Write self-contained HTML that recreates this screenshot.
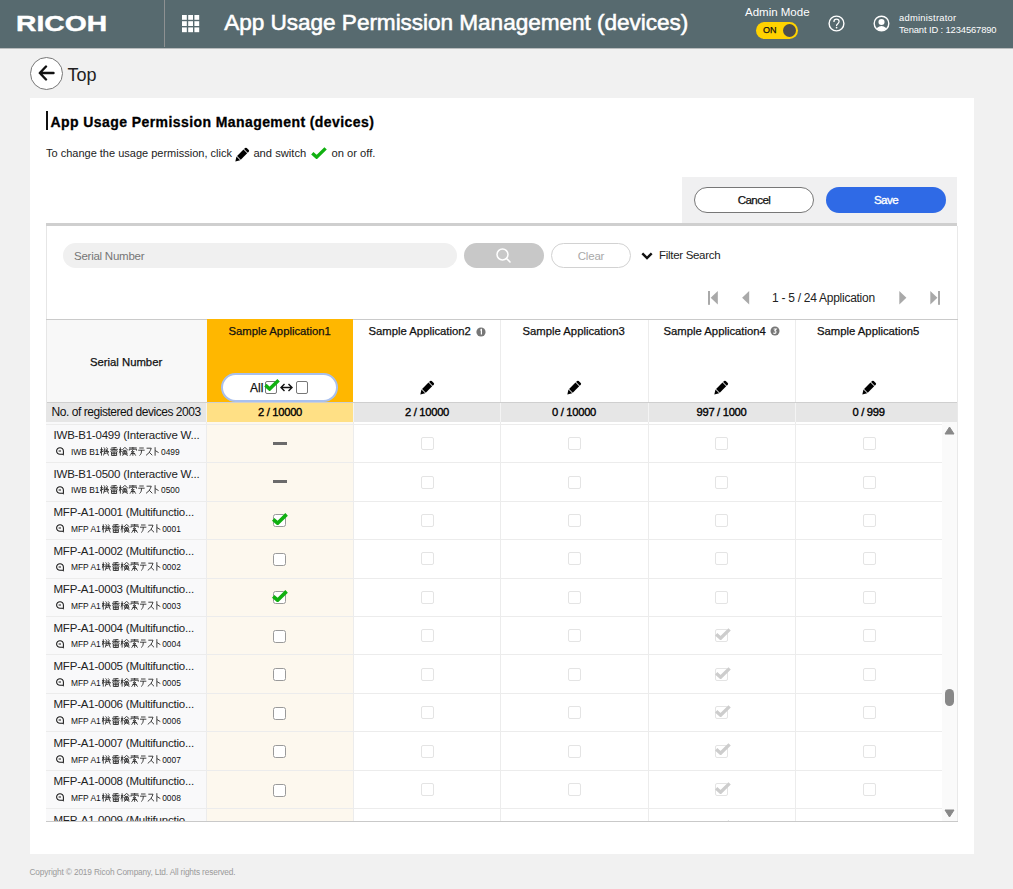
<!DOCTYPE html>
<html><head><meta charset="utf-8">
<style>
*{box-sizing:border-box;margin:0;padding:0}
html,body{width:1013px;height:889px;overflow:hidden;background:#f1f1f1;font-family:"Liberation Sans",sans-serif;color:#222}
#hdr{position:absolute;left:0;top:0;width:1013px;height:49px;background:#576a6f;border-bottom:1px solid #b9bcbd}
#panel{position:absolute;left:30px;top:98px;width:944px;height:756px;background:#fff}
.t{position:absolute;white-space:nowrap;line-height:1}
.ab{position:absolute}
.sb{-webkit-text-stroke:0.25px currentColor}
.cb{position:absolute;top:12.4px;width:13px;height:13px;border:1px solid #e4e4e4;border-radius:2px;background:#fff}
.cbd{position:absolute;top:12.8px;width:13px;height:13px;border:1.6px solid #9a9a9a;border-radius:2.5px;background:#fff}
.gchk{position:absolute;top:11.1px}
.dash{position:absolute;top:16.8px;width:14px;height:3px;background:#6b6b6b}
#rows{position:absolute;left:46px;top:422px;width:896px;height:399px;overflow:hidden}
.row{position:absolute;left:0;width:896px;height:38.45px;border-bottom:1px solid #ececec}
.s1{left:7.5px;top:5.5px;font-size:11.5px;letter-spacing:-0.21px;color:#222}
.s2{left:24.5px;top:22.3px;font-size:9.6px;color:#111;transform-origin:0 0;transform:scaleX(0.875)}
.jp{display:inline-block;vertical-align:-0.6px;margin-left:0.6px}
.mag{position:absolute;left:9.5px;top:22.6px}
.vdiv{position:absolute;width:1px;background:#ececec}
.ht{position:absolute;white-space:nowrap;line-height:1;font-size:11.3px;letter-spacing:0px;color:#111}
.pen{position:absolute;top:379.5px}
</style></head><body>
<svg width="0" height="0" style="position:absolute">
<defs>
<symbol id="g1" viewBox="0 0 10.8 9" width="10.8" height="9"><path d="M0.4 2.6 H3.4 M1.9 0.3 V8.6 M1.9 3 L0.3 6.3 M2.1 3.4 L3.4 5 M4.6 0.4 L5.8 1.8 L4.5 3.3 H6.3 M7.6 0.4 L8.8 1.8 L7.5 3.3 H9.3 M4.1 4.6 H10.4 M6.9 2.4 L10 8.6 M5.5 4.8 L4.2 8.4 M9.1 5.8 L10.3 4.8 M4.8 6.3 H7.7" fill="none" stroke="#2a2a2a" stroke-width="0.95"/></symbol>
<symbol id="g2" viewBox="0 0 10.8 9" width="10.8" height="9"><path d="M8.6 0.3 L2.2 1 M1.1 2.3 H9.9 M5.5 1 V4.4 M5.3 2.5 L1.3 4.4 M5.7 2.5 L9.7 4.4 M2.6 5 H8.4 V8.5 H2.6 Z M2.6 6.7 H8.4 M5.5 5 V8.5" fill="none" stroke="#2a2a2a" stroke-width="0.95"/></symbol>
<symbol id="g3" viewBox="0 0 10.8 9" width="10.8" height="9"><path d="M0.4 2.6 H3.4 M1.9 0.3 V8.6 M1.9 3 L0.3 6.3 M2.1 3.4 L3.4 5 M7 0.3 L4 3.1 M7 0.3 L10.5 3.1 M5.2 3.4 H8.8 M4.8 4.3 H9.2 V6.1 H4.8 Z M7 4.3 V6.1 M4 6.9 H10.4 M6.6 6.9 L4.2 8.6 M7.4 6.9 L10.4 8.6" fill="none" stroke="#2a2a2a" stroke-width="0.95"/></symbol>
<symbol id="g4" viewBox="0 0 10.8 9" width="10.8" height="9"><path d="M1 0.9 H9.9 M5.5 0 V2.1 M1.3 3.6 V2.2 H9.7 V3.6 M6 2.7 L3.8 4.7 H7 L3.2 6.5 H8 M5.5 6.5 V8.8 M3.8 7.2 L1.8 8.5 M7.2 7.2 L9.2 8.5" fill="none" stroke="#2a2a2a" stroke-width="0.95"/></symbol>
<symbol id="g5" viewBox="0 0 8.8 9" width="8.8" height="9"><path d="M2 1 H7.2 M0.8 3.2 H8.2 M4.6 3.2 C4.6 6 4 7.4 2.3 8.5" fill="none" stroke="#2a2a2a" stroke-width="0.95"/></symbol>
<symbol id="g6" viewBox="0 0 8.8 9" width="8.8" height="9"><path d="M1.6 1.2 H7 C5.9 4.2 4 6.8 1 8.3 M4.6 5.2 L8.2 8.3" fill="none" stroke="#2a2a2a" stroke-width="0.95"/></symbol>
<symbol id="g7" viewBox="0 0 8.8 9" width="8.8" height="9"><path d="M2.6 0.2 V8.7 M2.8 3.6 L6.6 5.6" fill="none" stroke="#2a2a2a" stroke-width="0.95"/></symbol>
</defs></svg>
<div id="hdr">
  <div class="t" id="logo" style="left:15.8px;top:13px;font-size:22px;font-weight:bold;color:#fff;-webkit-text-stroke:0.4px #fff;transform-origin:0 0;transform:scaleX(1.285)">RICOH</div>
  <div class="ab" style="left:164px;top:0;width:1px;height:47px;background:#8e9192"></div>
  <svg class="ab" style="left:182px;top:14.8px" width="18" height="18" viewBox="0 0 18 18" fill="#fff"><rect x="0.0" y="0.0" width="4.8" height="4.8"/><rect x="6.2" y="0.0" width="4.8" height="4.8"/><rect x="12.4" y="0.0" width="4.8" height="4.8"/><rect x="0.0" y="6.2" width="4.8" height="4.8"/><rect x="6.2" y="6.2" width="4.8" height="4.8"/><rect x="12.4" y="6.2" width="4.8" height="4.8"/><rect x="0.0" y="12.4" width="4.8" height="4.8"/><rect x="6.2" y="12.4" width="4.8" height="4.8"/><rect x="12.4" y="12.4" width="4.8" height="4.8"/></svg>
  <div class="t" id="htitle" style="left:224.3px;top:11.8px;font-size:22.6px;letter-spacing:-0.05px;color:#fff;-webkit-text-stroke:0.55px #fff">App Usage Permission Management (devices)</div>
  <div class="t" id="admin" style="left:745px;top:6.8px;font-size:11.5px;color:#fff">Admin Mode</div>
  <div class="ab" style="left:756px;top:22px;width:42px;height:17px;border-radius:9px;background:#ffd200"></div>
  <div class="ab" style="left:783px;top:24px;width:13px;height:13px;border-radius:50%;background:#4d4d4d"></div>
  <div class="t sb" style="left:763px;top:26px;font-size:9px;color:#111">ON</div>
  <svg class="ab" style="left:827px;top:14px" width="19" height="19" viewBox="0 0 19 19">
    <circle cx="9.5" cy="9.5" r="7.4" fill="none" stroke="#fff" stroke-width="1.4"/>
    <path d="M6.9 7.9 C6.9 6 8.1 5.2 9.5 5.2 C11 5.2 12.1 6.2 12.1 7.6 C12.1 9.4 10 9.7 9.6 11.2 V12" fill="none" stroke="#fff" stroke-width="1.2"/>
    <circle cx="9.6" cy="13.6" r="0.85" fill="#fff"/>
  </svg>
  <svg class="ab" style="left:873px;top:15px" width="17" height="17" viewBox="0 0 17 17">
    <defs><clipPath id="uc"><circle cx="8.5" cy="8.5" r="7"/></clipPath></defs>
    <circle cx="8.5" cy="8.5" r="7.3" fill="none" stroke="#fff" stroke-width="1.4"/>
    <circle cx="8.5" cy="7" r="3.05" fill="#fff"/>
    <ellipse cx="8.5" cy="16.4" rx="6" ry="5.3" fill="#fff" clip-path="url(#uc)"/>
  </svg>
  <div class="t" style="left:899px;top:13.2px;font-size:9.4px;letter-spacing:0.25px;color:#fff">administrator</div>
  <div class="t" style="left:899px;top:25px;font-size:9.4px;letter-spacing:-0.12px;color:#fff">Tenant ID : 1234567890</div>
</div>

<!-- back -->
<div class="ab" style="left:30px;top:57px;width:33px;height:33px;border-radius:50%;border:1px solid #777;background:#fff"></div>
<svg class="ab" style="left:38px;top:65px" width="17" height="16" viewBox="0 0 17 16">
  <path d="M8 1.5 L1.8 8 L8 14.5 M2 8 H15.5" fill="none" stroke="#111" stroke-width="2.4" stroke-linecap="round" stroke-linejoin="round"/>
</svg>
<div class="t" style="left:67.5px;top:66.3px;font-size:18px;color:#222">Top</div>

<div id="panel"></div>

<!-- title -->
<div class="ab" style="left:46px;top:111px;width:2px;height:19px;background:#111"></div>
<div class="t" style="left:50.5px;top:114.8px;font-size:14px;letter-spacing:0.42px;font-weight:bold;color:#000;-webkit-text-stroke:0.3px #000">App Usage Permission Management (devices)</div>
<div class="t" style="left:46px;top:147.8px;font-size:11px;color:#222">To change the usage permission, click</div><div class="t" style="left:253.4px;top:147.8px;font-size:11.2px;color:#222">and switch</div><div class="t" style="left:331.5px;top:147.8px;font-size:11.2px;color:#222">on or off.</div>
<svg class="ab" style="left:234.5px;top:147px" width="15" height="15" viewBox="0 0 15 15">
<g transform="translate(0.3 14.5) rotate(-45)" fill="#000"><path d="M0 0 L4.3 -2.6 L4.3 2.6 Z"/><rect x="5.1" y="-2.6" width="9.1" height="5.2"/><path d="M15 -2.6 H16.4 A1.2 1.2 0 0 1 17.6 -1.4 V1.4 A1.2 1.2 0 0 1 16.4 2.6 H15 Z"/></g>
</svg>
<svg class="ab" style="left:311px;top:147px" width="16" height="12" viewBox="0 0 16 12">
  <path d="M1.3 6.3 L5.6 10.1 L14.6 1.4" fill="none" stroke="#10b010" stroke-width="3.4"/>
</svg>

<!-- buttons -->
<div class="ab" style="left:682px;top:177px;width:275px;height:46px;background:#f0f0f1"></div>
<div class="ab" style="left:46px;top:223px;width:911px;height:3px;background:#cfcfcf"></div>
<div class="ab" style="left:694px;top:187px;width:120px;height:26px;border:1px solid #777;border-radius:13px;background:#fff"></div>
<div class="t sb" style="left:694px;width:120px;text-align:center;top:193.6px;font-size:11.6px;letter-spacing:-0.6px;color:#111">Cancel</div>
<div class="ab" style="left:826px;top:187px;width:120px;height:26px;border-radius:13px;background:#2f6ae6"></div>
<div class="t sb" style="left:826px;width:120px;text-align:center;top:193.6px;font-size:11.6px;letter-spacing:-0.6px;color:#fff;-webkit-text-stroke:0.35px #fff">Save</div>

<!-- search -->
<div class="ab" style="left:46px;top:226px;width:1px;height:94px;background:#e6e6e6"></div>
<div class="ab" style="left:957px;top:226px;width:1px;height:596px;background:#e9e9e9"></div>
<div class="ab" style="left:63px;top:243px;width:394px;height:25px;border-radius:12.5px;background:#f0f0f0"></div>
<div class="t" style="left:74px;top:250.5px;font-size:11.5px;letter-spacing:-0.25px;color:#767676">Serial Number</div>
<div class="ab" style="left:464px;top:243px;width:80px;height:25px;border-radius:12.5px;background:#c8c8c8"></div>
<svg class="ab" style="left:495px;top:247px" width="17" height="17" viewBox="0 0 17 17">
  <circle cx="7.5" cy="7.5" r="5.5" fill="none" stroke="#fff" stroke-width="1.5"/>
  <path d="M11.5 11.5 L15 15" stroke="#fff" stroke-width="1.6" stroke-linecap="round"/>
</svg>
<div class="ab" style="left:551px;top:243px;width:80px;height:25px;border:1px solid #d2d2d2;border-radius:12.5px;background:#fff"></div>
<div class="t" style="left:551px;width:80px;text-align:center;top:250.5px;font-size:11.5px;letter-spacing:-0.2px;color:#a9a9a9">Clear</div>
<svg class="ab" style="left:641px;top:252px" width="12" height="8" viewBox="0 0 12 8">
  <path d="M1.3 1.3 L6 6 L10.7 1.3" fill="none" stroke="#111" stroke-width="2.4"/>
</svg>
<div class="t" style="left:659px;top:249.5px;font-size:11.5px;letter-spacing:-0.3px;color:#222">Filter Search</div>

<!-- pagination -->
<svg class="ab" style="left:706px;top:290px" width="14" height="16" viewBox="0 0 14 16" fill="#a9a9a9">
  <rect x="2" y="1" width="2" height="13.8"/><path d="M11.8 0.9 V14.6 L4.7 7.75 Z"/>
</svg>
<svg class="ab" style="left:740px;top:290px" width="12" height="16" viewBox="0 0 12 16" fill="#a9a9a9">
  <path d="M9.2 0.9 V14.6 L2.1 7.75 Z"/>
</svg>
<div class="t" style="left:772px;top:291.9px;font-size:12px;letter-spacing:-0.27px;color:#222">1 - 5 / 24 Application</div>
<svg class="ab" style="left:897px;top:290px" width="12" height="16" viewBox="0 0 12 16" fill="#a9a9a9">
  <path d="M2.3 0.9 V14.6 L9.4 7.75 Z"/>
</svg>
<svg class="ab" style="left:928px;top:290px" width="14" height="16" viewBox="0 0 14 16" fill="#a9a9a9">
  <path d="M2.3 0.9 V14.6 L9.4 7.75 Z"/><rect x="10" y="1" width="2" height="13.8"/>
</svg>

<!-- table header -->
<div class="ab" style="left:46px;top:319px;width:912px;height:1px;background:#cacaca"></div>
<div class="ab" style="left:46px;top:320px;width:1px;height:502px;background:#e6e6e6"></div>
<div class="ab" style="left:47px;top:320px;width:159.5px;height:82px;background:#f8f8f8"></div>
<div class="ab" style="left:206.5px;top:319px;width:146.5px;height:83px;background:#ffb700"></div>
<div class="vdiv" style="left:500px;top:320px;height:82px"></div>
<div class="vdiv" style="left:648px;top:320px;height:82px"></div>
<div class="vdiv" style="left:795px;top:320px;height:82px"></div>
<div class="ht sb" style="left:90px;top:356.6px">Serial Number</div>
<div class="ht sb" style="left:228.5px;top:326px">Sample Application1</div>
<div class="ht sb" style="left:368.5px;top:326px">Sample Application2</div>
<div class="ht sb" style="left:522.5px;top:326px">Sample Application3</div>
<div class="ht sb" style="left:663.5px;top:326px">Sample Application4</div>
<div class="ht sb" style="left:817px;top:326px">Sample Application5</div>
<svg class="ab" style="left:476px;top:326.5px" width="10" height="10" viewBox="0 0 10 10"><circle cx="5" cy="5" r="4.6" fill="#777"/><path d="M4.3 3.2 L5.4 2.6 V7.5" stroke="#fff" stroke-width="1.2" fill="none"/></svg>
<svg class="ab" style="left:770.4px;top:326.3px" width="10" height="10" viewBox="0 0 10 10"><circle cx="5" cy="5" r="4.5" fill="#777"/><path d="M3.6 3 H6.2 L4.8 4.8 C6.4 4.8 6.6 7.4 4.6 7.4 C4 7.4 3.6 7.1 3.4 6.8" stroke="#fff" stroke-width="1.1" fill="none"/></svg>
<!-- pencils -->
<svg class="pen" style="left:419.5px" width="15" height="15" viewBox="0 0 15 15"><g transform="translate(0.3 14.5) rotate(-45)" fill="#000"><path d="M0 0 L4.3 -2.6 L4.3 2.6 Z"/><rect x="5.1" y="-2.6" width="9.1" height="5.2"/><path d="M15 -2.6 H16.4 A1.2 1.2 0 0 1 17.6 -1.4 V1.4 A1.2 1.2 0 0 1 16.4 2.6 H15 Z"/></g></svg>
<svg class="pen" style="left:566.5px" width="15" height="15" viewBox="0 0 15 15"><g transform="translate(0.3 14.5) rotate(-45)" fill="#000"><path d="M0 0 L4.3 -2.6 L4.3 2.6 Z"/><rect x="5.1" y="-2.6" width="9.1" height="5.2"/><path d="M15 -2.6 H16.4 A1.2 1.2 0 0 1 17.6 -1.4 V1.4 A1.2 1.2 0 0 1 16.4 2.6 H15 Z"/></g></svg>
<svg class="pen" style="left:714px" width="15" height="15" viewBox="0 0 15 15"><g transform="translate(0.3 14.5) rotate(-45)" fill="#000"><path d="M0 0 L4.3 -2.6 L4.3 2.6 Z"/><rect x="5.1" y="-2.6" width="9.1" height="5.2"/><path d="M15 -2.6 H16.4 A1.2 1.2 0 0 1 17.6 -1.4 V1.4 A1.2 1.2 0 0 1 16.4 2.6 H15 Z"/></g></svg>
<svg class="pen" style="left:861.5px" width="15" height="15" viewBox="0 0 15 15"><g transform="translate(0.3 14.5) rotate(-45)" fill="#000"><path d="M0 0 L4.3 -2.6 L4.3 2.6 Z"/><rect x="5.1" y="-2.6" width="9.1" height="5.2"/><path d="M15 -2.6 H16.4 A1.2 1.2 0 0 1 17.6 -1.4 V1.4 A1.2 1.2 0 0 1 16.4 2.6 H15 Z"/></g></svg>
<!-- All toggle -->
<div class="ab" style="left:221px;top:372.5px;width:117px;height:29.5px;border:2px solid #a9c0ee;border-radius:15px;background:#fff"></div>
<div class="t sb" style="left:250px;top:382px;font-size:12px;color:#111">All</div>
<div class="ab" style="left:264.5px;top:381.3px;width:12.5px;height:12.5px;border:1.5px solid #777;border-radius:2px;background:#fff"></div>
<svg class="ab" style="left:263.5px;top:379px" width="16" height="12" viewBox="0 0 16 12"><path d="M1.4 6.1 L5.6 10 L14.6 1.3" fill="none" stroke="#10b010" stroke-width="3.5"/></svg>
<svg class="ab" style="left:280px;top:382px" width="13" height="11" viewBox="0 0 13 11"><path d="M1 5.5 H12 M4.5 2 L1 5.5 L4.5 9 M8.5 2 L12 5.5 L8.5 9" fill="none" stroke="#111" stroke-width="1.4"/></svg>
<div class="ab" style="left:295.5px;top:381.3px;width:12.5px;height:12.5px;border:1.5px solid #777;border-radius:2px;background:#fff"></div>

<!-- registered row -->
<div class="ab" style="left:47px;top:402px;width:910px;height:1px;background:#cfcfcf"></div>
<div class="ab" style="left:47px;top:403px;width:910px;height:19px;background:#e6e6e6"></div>
<div class="ab" style="left:206.5px;top:403px;width:146.5px;height:19px;background:#ffe085"></div>
<div class="vdiv" style="left:206px;top:403px;height:19px;background:#f4f4f4"></div>
<div class="vdiv" style="left:353px;top:403px;height:19px;background:#f4f4f4"></div>
<div class="vdiv" style="left:500px;top:403px;height:19px;background:#f4f4f4"></div>
<div class="vdiv" style="left:648px;top:403px;height:19px;background:#f4f4f4"></div>
<div class="vdiv" style="left:795px;top:403px;height:19px;background:#f4f4f4"></div>
<div class="t" style="left:51.5px;top:406px;font-size:12px;letter-spacing:-0.45px;color:#111">No. of registered devices 2003</div>
<div class="ht sb" style="left:206.5px;width:147px;text-align:center;top:406.7px;font-size:11.2px;letter-spacing:-0.3px;color:#000;-webkit-text-stroke:0.35px #000">2 / 10000</div>
<div class="ht sb" style="left:353.5px;width:147px;text-align:center;top:406.7px;font-size:11.2px;letter-spacing:-0.3px;color:#000;-webkit-text-stroke:0.35px #000">2 / 10000</div>
<div class="ht sb" style="left:500.5px;width:147px;text-align:center;top:406.7px;font-size:11.2px;letter-spacing:-0.3px;color:#000;-webkit-text-stroke:0.35px #000">0 / 10000</div>
<div class="ht sb" style="left:648px;width:147px;text-align:center;top:406.7px;font-size:11.2px;letter-spacing:-0.3px;color:#000;-webkit-text-stroke:0.35px #000">997 / 1000</div>
<div class="ht sb" style="left:795px;width:147px;text-align:center;top:406.7px;font-size:11.2px;letter-spacing:-0.3px;color:#000;-webkit-text-stroke:0.35px #000">0 / 999</div>

<!-- data rows -->
<div id="rows">
  <div class="ab" style="left:0;top:0;width:160.5px;height:400px;background:#f9f9fa"></div>
  <div class="ab" style="left:160.5px;top:0;width:146.5px;height:400px;background:#fdf8ee"></div>
  <div class="ab" style="left:0;top:2px;width:896px;height:1px;background:#ececec"></div>
  <div class="vdiv" style="left:160px;top:0;height:400px"></div>
  <div class="vdiv" style="left:307px;top:0;height:400px"></div>
  <div class="vdiv" style="left:454px;top:0;height:400px"></div>
  <div class="vdiv" style="left:602px;top:0;height:400px"></div>
  <div class="vdiv" style="left:749px;top:0;height:400px"></div>
<div class="row" style="top:2.75px">
<div class="t s1">IWB-B1-0499 (Interactive W...</div>
<svg class="mag" width="9" height="10" viewBox="0 0 9 10"><path d="M7.4 4 A3.4 3.3 0 1 0 4 7.3 H7.4 Z" fill="none" stroke="#1a1a1a" stroke-width="1.05" stroke-linejoin="round"/><path d="M7 7.2 L7.5 8.3" stroke="#1a1a1a" stroke-width="1"/><path d="M2.6 4 H5" stroke="#1a1a1a" stroke-width="1"/></svg><div class="t s2">IWB B1<svg class="jp" width="69.7" height="9" viewBox="0 0 70 9" preserveAspectRatio="none"><use href="#g1" x="0"/><use href="#g2" x="10.8"/><use href="#g3" x="21.6"/><use href="#g4" x="32.4"/><use href="#g5" x="43.2"/><use href="#g6" x="52"/><use href="#g7" x="60.8"/></svg>0499</div>
<div class="dash" style="left:227.1px"></div>
<div class="cb" style="left:374.7px"></div>
<div class="cb" style="left:522.0px"></div>
<div class="cb" style="left:669.3px"></div>
<div class="cb" style="left:816.5px"></div>
</div>
<div class="row" style="top:41.20px">
<div class="t s1">IWB-B1-0500 (Interactive W...</div>
<svg class="mag" width="9" height="10" viewBox="0 0 9 10"><path d="M7.4 4 A3.4 3.3 0 1 0 4 7.3 H7.4 Z" fill="none" stroke="#1a1a1a" stroke-width="1.05" stroke-linejoin="round"/><path d="M7 7.2 L7.5 8.3" stroke="#1a1a1a" stroke-width="1"/><path d="M2.6 4 H5" stroke="#1a1a1a" stroke-width="1"/></svg><div class="t s2">IWB B1<svg class="jp" width="69.7" height="9" viewBox="0 0 70 9" preserveAspectRatio="none"><use href="#g1" x="0"/><use href="#g2" x="10.8"/><use href="#g3" x="21.6"/><use href="#g4" x="32.4"/><use href="#g5" x="43.2"/><use href="#g6" x="52"/><use href="#g7" x="60.8"/></svg>0500</div>
<div class="dash" style="left:227.1px"></div>
<div class="cb" style="left:374.7px"></div>
<div class="cb" style="left:522.0px"></div>
<div class="cb" style="left:669.3px"></div>
<div class="cb" style="left:816.5px"></div>
</div>
<div class="row" style="top:79.65px">
<div class="t s1">MFP-A1-0001 (Multifunctio...</div>
<svg class="mag" width="9" height="10" viewBox="0 0 9 10"><path d="M7.4 4 A3.4 3.3 0 1 0 4 7.3 H7.4 Z" fill="none" stroke="#1a1a1a" stroke-width="1.05" stroke-linejoin="round"/><path d="M7 7.2 L7.5 8.3" stroke="#1a1a1a" stroke-width="1"/><path d="M2.6 4 H5" stroke="#1a1a1a" stroke-width="1"/></svg><div class="t s2">MFP A1<svg class="jp" width="69.7" height="9" viewBox="0 0 70 9" preserveAspectRatio="none"><use href="#g1" x="0"/><use href="#g2" x="10.8"/><use href="#g3" x="21.6"/><use href="#g4" x="32.4"/><use href="#g5" x="43.2"/><use href="#g6" x="52"/><use href="#g7" x="60.8"/></svg>0001</div>
<div class="cbd" style="left:226.8px"></div><svg class="gchk" style="left:226.1px" width="16" height="12" viewBox="0 0 16 12"><path d="M1.2 6.3 L5.6 10.2 L14.6 1.4" fill="none" stroke="#10b010" stroke-width="3.6"/></svg>
<div class="cb" style="left:374.7px"></div>
<div class="cb" style="left:522.0px"></div>
<div class="cb" style="left:669.3px"></div>
<div class="cb" style="left:816.5px"></div>
</div>
<div class="row" style="top:118.10px">
<div class="t s1">MFP-A1-0002 (Multifunctio...</div>
<svg class="mag" width="9" height="10" viewBox="0 0 9 10"><path d="M7.4 4 A3.4 3.3 0 1 0 4 7.3 H7.4 Z" fill="none" stroke="#1a1a1a" stroke-width="1.05" stroke-linejoin="round"/><path d="M7 7.2 L7.5 8.3" stroke="#1a1a1a" stroke-width="1"/><path d="M2.6 4 H5" stroke="#1a1a1a" stroke-width="1"/></svg><div class="t s2">MFP A1<svg class="jp" width="69.7" height="9" viewBox="0 0 70 9" preserveAspectRatio="none"><use href="#g1" x="0"/><use href="#g2" x="10.8"/><use href="#g3" x="21.6"/><use href="#g4" x="32.4"/><use href="#g5" x="43.2"/><use href="#g6" x="52"/><use href="#g7" x="60.8"/></svg>0002</div>
<div class="cbd" style="left:226.8px"></div>
<div class="cb" style="left:374.7px"></div>
<div class="cb" style="left:522.0px"></div>
<div class="cb" style="left:669.3px"></div>
<div class="cb" style="left:816.5px"></div>
</div>
<div class="row" style="top:156.55px">
<div class="t s1">MFP-A1-0003 (Multifunctio...</div>
<svg class="mag" width="9" height="10" viewBox="0 0 9 10"><path d="M7.4 4 A3.4 3.3 0 1 0 4 7.3 H7.4 Z" fill="none" stroke="#1a1a1a" stroke-width="1.05" stroke-linejoin="round"/><path d="M7 7.2 L7.5 8.3" stroke="#1a1a1a" stroke-width="1"/><path d="M2.6 4 H5" stroke="#1a1a1a" stroke-width="1"/></svg><div class="t s2">MFP A1<svg class="jp" width="69.7" height="9" viewBox="0 0 70 9" preserveAspectRatio="none"><use href="#g1" x="0"/><use href="#g2" x="10.8"/><use href="#g3" x="21.6"/><use href="#g4" x="32.4"/><use href="#g5" x="43.2"/><use href="#g6" x="52"/><use href="#g7" x="60.8"/></svg>0003</div>
<div class="cbd" style="left:226.8px"></div><svg class="gchk" style="left:226.1px" width="16" height="12" viewBox="0 0 16 12"><path d="M1.2 6.3 L5.6 10.2 L14.6 1.4" fill="none" stroke="#10b010" stroke-width="3.6"/></svg>
<div class="cb" style="left:374.7px"></div>
<div class="cb" style="left:522.0px"></div>
<div class="cb" style="left:669.3px"></div>
<div class="cb" style="left:816.5px"></div>
</div>
<div class="row" style="top:195.00px">
<div class="t s1">MFP-A1-0004 (Multifunctio...</div>
<svg class="mag" width="9" height="10" viewBox="0 0 9 10"><path d="M7.4 4 A3.4 3.3 0 1 0 4 7.3 H7.4 Z" fill="none" stroke="#1a1a1a" stroke-width="1.05" stroke-linejoin="round"/><path d="M7 7.2 L7.5 8.3" stroke="#1a1a1a" stroke-width="1"/><path d="M2.6 4 H5" stroke="#1a1a1a" stroke-width="1"/></svg><div class="t s2">MFP A1<svg class="jp" width="69.7" height="9" viewBox="0 0 70 9" preserveAspectRatio="none"><use href="#g1" x="0"/><use href="#g2" x="10.8"/><use href="#g3" x="21.6"/><use href="#g4" x="32.4"/><use href="#g5" x="43.2"/><use href="#g6" x="52"/><use href="#g7" x="60.8"/></svg>0004</div>
<div class="cbd" style="left:226.8px"></div>
<div class="cb" style="left:374.7px"></div>
<div class="cb" style="left:522.0px"></div>
<div class="cb" style="left:669.3px"></div>
<svg class="gchk" style="left:668.8px" width="16" height="12" viewBox="0 0 16 12"><path d="M1.2 6.3 L5.6 10.2 L14.6 1.4" fill="none" stroke="#cdcdcd" stroke-width="3.4"/></svg>
<div class="cb" style="left:816.5px"></div>
</div>
<div class="row" style="top:233.45px">
<div class="t s1">MFP-A1-0005 (Multifunctio...</div>
<svg class="mag" width="9" height="10" viewBox="0 0 9 10"><path d="M7.4 4 A3.4 3.3 0 1 0 4 7.3 H7.4 Z" fill="none" stroke="#1a1a1a" stroke-width="1.05" stroke-linejoin="round"/><path d="M7 7.2 L7.5 8.3" stroke="#1a1a1a" stroke-width="1"/><path d="M2.6 4 H5" stroke="#1a1a1a" stroke-width="1"/></svg><div class="t s2">MFP A1<svg class="jp" width="69.7" height="9" viewBox="0 0 70 9" preserveAspectRatio="none"><use href="#g1" x="0"/><use href="#g2" x="10.8"/><use href="#g3" x="21.6"/><use href="#g4" x="32.4"/><use href="#g5" x="43.2"/><use href="#g6" x="52"/><use href="#g7" x="60.8"/></svg>0005</div>
<div class="cbd" style="left:226.8px"></div>
<div class="cb" style="left:374.7px"></div>
<div class="cb" style="left:522.0px"></div>
<div class="cb" style="left:669.3px"></div>
<svg class="gchk" style="left:668.8px" width="16" height="12" viewBox="0 0 16 12"><path d="M1.2 6.3 L5.6 10.2 L14.6 1.4" fill="none" stroke="#cdcdcd" stroke-width="3.4"/></svg>
<div class="cb" style="left:816.5px"></div>
</div>
<div class="row" style="top:271.90px">
<div class="t s1">MFP-A1-0006 (Multifunctio...</div>
<svg class="mag" width="9" height="10" viewBox="0 0 9 10"><path d="M7.4 4 A3.4 3.3 0 1 0 4 7.3 H7.4 Z" fill="none" stroke="#1a1a1a" stroke-width="1.05" stroke-linejoin="round"/><path d="M7 7.2 L7.5 8.3" stroke="#1a1a1a" stroke-width="1"/><path d="M2.6 4 H5" stroke="#1a1a1a" stroke-width="1"/></svg><div class="t s2">MFP A1<svg class="jp" width="69.7" height="9" viewBox="0 0 70 9" preserveAspectRatio="none"><use href="#g1" x="0"/><use href="#g2" x="10.8"/><use href="#g3" x="21.6"/><use href="#g4" x="32.4"/><use href="#g5" x="43.2"/><use href="#g6" x="52"/><use href="#g7" x="60.8"/></svg>0006</div>
<div class="cbd" style="left:226.8px"></div>
<div class="cb" style="left:374.7px"></div>
<div class="cb" style="left:522.0px"></div>
<div class="cb" style="left:669.3px"></div>
<svg class="gchk" style="left:668.8px" width="16" height="12" viewBox="0 0 16 12"><path d="M1.2 6.3 L5.6 10.2 L14.6 1.4" fill="none" stroke="#cdcdcd" stroke-width="3.4"/></svg>
<div class="cb" style="left:816.5px"></div>
</div>
<div class="row" style="top:310.35px">
<div class="t s1">MFP-A1-0007 (Multifunctio...</div>
<svg class="mag" width="9" height="10" viewBox="0 0 9 10"><path d="M7.4 4 A3.4 3.3 0 1 0 4 7.3 H7.4 Z" fill="none" stroke="#1a1a1a" stroke-width="1.05" stroke-linejoin="round"/><path d="M7 7.2 L7.5 8.3" stroke="#1a1a1a" stroke-width="1"/><path d="M2.6 4 H5" stroke="#1a1a1a" stroke-width="1"/></svg><div class="t s2">MFP A1<svg class="jp" width="69.7" height="9" viewBox="0 0 70 9" preserveAspectRatio="none"><use href="#g1" x="0"/><use href="#g2" x="10.8"/><use href="#g3" x="21.6"/><use href="#g4" x="32.4"/><use href="#g5" x="43.2"/><use href="#g6" x="52"/><use href="#g7" x="60.8"/></svg>0007</div>
<div class="cbd" style="left:226.8px"></div>
<div class="cb" style="left:374.7px"></div>
<div class="cb" style="left:522.0px"></div>
<div class="cb" style="left:669.3px"></div>
<svg class="gchk" style="left:668.8px" width="16" height="12" viewBox="0 0 16 12"><path d="M1.2 6.3 L5.6 10.2 L14.6 1.4" fill="none" stroke="#cdcdcd" stroke-width="3.4"/></svg>
<div class="cb" style="left:816.5px"></div>
</div>
<div class="row" style="top:348.80px">
<div class="t s1">MFP-A1-0008 (Multifunctio...</div>
<svg class="mag" width="9" height="10" viewBox="0 0 9 10"><path d="M7.4 4 A3.4 3.3 0 1 0 4 7.3 H7.4 Z" fill="none" stroke="#1a1a1a" stroke-width="1.05" stroke-linejoin="round"/><path d="M7 7.2 L7.5 8.3" stroke="#1a1a1a" stroke-width="1"/><path d="M2.6 4 H5" stroke="#1a1a1a" stroke-width="1"/></svg><div class="t s2">MFP A1<svg class="jp" width="69.7" height="9" viewBox="0 0 70 9" preserveAspectRatio="none"><use href="#g1" x="0"/><use href="#g2" x="10.8"/><use href="#g3" x="21.6"/><use href="#g4" x="32.4"/><use href="#g5" x="43.2"/><use href="#g6" x="52"/><use href="#g7" x="60.8"/></svg>0008</div>
<div class="cbd" style="left:226.8px"></div>
<div class="cb" style="left:374.7px"></div>
<div class="cb" style="left:522.0px"></div>
<div class="cb" style="left:669.3px"></div>
<svg class="gchk" style="left:668.8px" width="16" height="12" viewBox="0 0 16 12"><path d="M1.2 6.3 L5.6 10.2 L14.6 1.4" fill="none" stroke="#cdcdcd" stroke-width="3.4"/></svg>
<div class="cb" style="left:816.5px"></div>
</div>
<div class="row" style="top:387.25px">
<div class="t s1">MFP-A1-0009 (Multifunctio...</div>
<svg class="mag" width="9" height="10" viewBox="0 0 9 10"><path d="M7.4 4 A3.4 3.3 0 1 0 4 7.3 H7.4 Z" fill="none" stroke="#1a1a1a" stroke-width="1.05" stroke-linejoin="round"/><path d="M7 7.2 L7.5 8.3" stroke="#1a1a1a" stroke-width="1"/><path d="M2.6 4 H5" stroke="#1a1a1a" stroke-width="1"/></svg><div class="t s2">MFP A1<svg class="jp" width="69.7" height="9" viewBox="0 0 70 9" preserveAspectRatio="none"><use href="#g1" x="0"/><use href="#g2" x="10.8"/><use href="#g3" x="21.6"/><use href="#g4" x="32.4"/><use href="#g5" x="43.2"/><use href="#g6" x="52"/><use href="#g7" x="60.8"/></svg>0009</div>
<div class="cbd" style="left:226.8px"></div>
<div class="cb" style="left:374.7px"></div>
<div class="cb" style="left:522.0px"></div>
<div class="cb" style="left:669.3px"></div>
<svg class="gchk" style="left:668.8px" width="16" height="12" viewBox="0 0 16 12"><path d="M1.2 6.3 L5.6 10.2 L14.6 1.4" fill="none" stroke="#cdcdcd" stroke-width="3.4"/></svg>
<div class="cb" style="left:816.5px"></div>
</div>
</div>
<!-- scrollbar -->
<div class="ab" style="left:942px;top:422px;width:15px;height:399px;background:#fafafa"></div>
<svg class="ab" style="left:944px;top:426px" width="11" height="9" viewBox="0 0 11 9"><path d="M5.5 1 L10 8 H1 Z" fill="#888" stroke="#888" stroke-width="1" stroke-linejoin="round"/></svg>
<div class="ab" style="left:945px;top:689px;width:9px;height:17px;border-radius:4.5px;background:#888"></div>
<svg class="ab" style="left:944px;top:809px" width="11" height="9" viewBox="0 0 11 9"><path d="M5.5 8 L10 1 H1 Z" fill="#888" stroke="#888" stroke-width="1" stroke-linejoin="round"/></svg>
<div class="ab" style="left:46px;top:821px;width:912px;height:1px;background:#c9c9c9"></div>

<div class="t" style="left:29.5px;top:867.7px;font-size:8.3px;letter-spacing:-0.15px;color:#9a9a9a">Copyright © 2019 Ricoh Company, Ltd. All rights reserved.</div>
</body></html>
